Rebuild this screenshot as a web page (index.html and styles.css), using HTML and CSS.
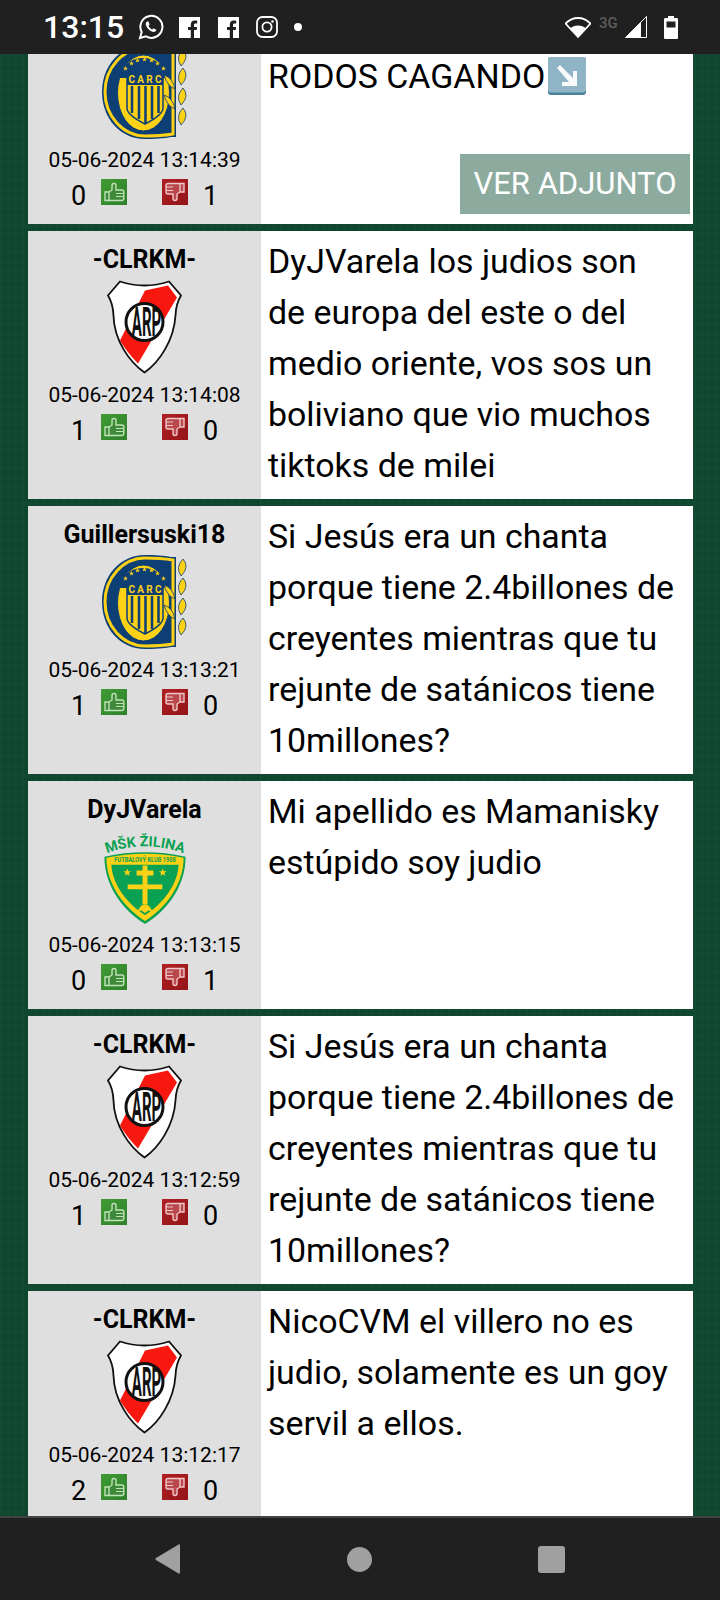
FILE: index.html
```html
<!DOCTYPE html>
<html>
<head>
<title>Comentarios</title>
<meta charset="utf-8">
<link rel="stylesheet" href="styles.css">
</head>
<body>

<svg class="sprite" xmlns="http://www.w3.org/2000/svg">
  <defs>
    <linearGradient id="up-bg" x1="0" y1="0" x2="1" y2="1">
      <stop offset="0" stop-color="#3f9c34"/>
      <stop offset="1" stop-color="#2f7f2a"/>
    </linearGradient>
    <linearGradient id="down-bg" x1="0" y1="0" x2="1" y2="1">
      <stop offset="0" stop-color="#b02024"/>
      <stop offset="1" stop-color="#931418"/>
    </linearGradient>
  </defs>

  <symbol id="thumb-up" viewBox="0 0 26 26">
    <rect width="26" height="26" fill="url(#up-bg)"/>
    <path d="M4 13h4v8.500H4zM8 13l3-2V6.500c0-2.700 4-2.700 4 0v4.500h6c1.200 0 1.800.7 1.800 2v6.500c0 1.300-.8 2-2 2H8z" fill="#3f8a3a" stroke="#bfe3b6" stroke-width="1.400"/>
    <path d="M15 14.500h7.500M15 17.500h7.500" stroke="#bfe3b6" stroke-width="1.200"/>
  </symbol>

  <symbol id="thumb-down" viewBox="0 0 26 26">
    <rect width="26" height="26" fill="url(#down-bg)"/>
    <path d="M22 4.500h-4V13h4zM18 4.500H6c-1.200 0-2 .7-2 2V13c0 1.300.7 2 2 2h5v4.500c0 2.700 4 2.700 4 0V15l3-2z" fill="#b9484c" stroke="#f0c6c6" stroke-width="1.400"/>
    <path d="M4 8h7M4 11.500h7" stroke="#f0c6c6" stroke-width="1.200"/>
  </symbol>

  <symbol id="star5" viewBox="-3 -3 6 6">
    <path d="M0-3 .8-.9 3-.9 1.200.4 1.900 2.500 0 1.200-1.900 2.500-1.200.4-3-.9-.8-.9z" fill="#fdd116"/>
  </symbol>
</svg>

<div class="status-bar">
  <span class="clock">13:15</span>

  <svg class="st-whatsapp" viewBox="0 0 26 26">
    <path d="M2 24l1.700-6A11 11 0 1 1 8 22.400z" fill="none" stroke="#fff" stroke-width="2"/>
    <path d="M9 7.500c-1.500 1-1.700 3-.5 5 1.300 2.300 3.500 4.500 6 5.300 1.700.5 3.500-.3 4-1.800l-3-1.700-1.300 1.300c-1.500-.7-3-2.200-3.700-3.800l1.200-1.300-1.300-3z" fill="#fff"/>
  </svg>
  <svg class="st-fb" viewBox="0 0 21 21">
    <path d="M0 0h21v21h-6v-8h2.700l.4-3H15V8c0-1 .4-1.500 1.500-1.500h1.700V3.700c-.5 0-1.400-.1-2.300-.1-2.500 0-4.100 1.500-4.100 4.100V10H9v3h2.800v8H0z" fill="#fff"/>
  </svg>
  <svg class="st-fb" viewBox="0 0 21 21">
    <path d="M0 0h21v21h-6v-8h2.700l.4-3H15V8c0-1 .4-1.500 1.500-1.500h1.700V3.700c-.5 0-1.400-.1-2.300-.1-2.500 0-4.100 1.500-4.100 4.100V10H9v3h2.800v8H0z" fill="#fff"/>
  </svg>
  <svg class="st-insta" viewBox="0 0 22 22">
    <rect x="1" y="1" width="20" height="20" rx="5.500" fill="none" stroke="#fff" stroke-width="1.800"/>
    <circle cx="11" cy="11" r="4.600" fill="none" stroke="#fff" stroke-width="1.800"/>
    <circle cx="16.500" cy="5.500" r="1.300" fill="#fff"/>
  </svg>
  <span class="st-dot"></span>

  <div class="status-right">
    <svg class="st-wifi" viewBox="0 0 26 22">
      <path d="M13 21 .5 7.500C4 4 8.300 2 13 2s9 2 12.500 5.500z" fill="none" stroke="#fff" stroke-width="1.800"/>
      <path d="M13 21 5 12.500C7 10.500 10 9.500 13 9.500s6 1 8 3z" fill="#fff"/>
    </svg>
    <span class="st-3g">3G</span>
    <svg class="st-signal" viewBox="0 0 22 22">
      <path d="M21.500 .5V21.500H.5z" fill="none" stroke="#fff" stroke-width="1"/>
      <path d="M16 6V21.500H.5z" fill="#fff"/>
    </svg>
    <svg class="st-battery" viewBox="0 0 14 23">
      <path d="M4 0h6v2h2.500c1 0 1.500.5 1.500 1.500V21.500c0 1-.5 1.500-1.500 1.500h-11C.5 23 0 22.500 0 21.500V3.500C0 2.500.5 2 1.500 2H4z" fill="#fff"/>
      <rect x="2.500" y="5.500" width="9" height="6" fill="#202020"/>
    </svg>
  </div>
</div>

<div class="feed">

  <div class="post">
    <div class="post-side">
      <div class="post-user"></div>
      <svg class="crest crest-ros" viewBox="0 0 85 94">
        <path d="M74 2H69C62 .5 52 0 43 0 18 0 0 21 0 47s18 47 43 47c9 0 19-.5 26-2h5z" fill="#0d3f75"/>
        <path d="M71 5C62 3.500 52 3 43 3 21 3 3 23 3 47s18 44 40 44c9 0 19-.5 28-2z" fill="none" stroke="#fdd116" stroke-width="3"/>
        <ellipse cx="41.500" cy="48" rx="26" ry="38" fill="#fdd116" stroke="#0d3f75" stroke-width="1"/>
        <path d="M17 33C21 18 31 13 41.500 13S63 19 66 33z" fill="#0d3f75"/>
        <use href="#star5" x="21" y="21" width="5" height="5"/><use href="#star5" x="27" y="16" width="5" height="5"/><use href="#star5" x="33" y="13" width="5" height="5"/><use href="#star5" x="40" y="12" width="5" height="5"/><use href="#star5" x="47" y="13" width="5" height="5"/><use href="#star5" x="53" y="16" width="5" height="5"/><use href="#star5" x="59" y="21" width="5" height="5"/>
        <path d="M25 28 43 23l18 5v35c0 6-8 11-18 16-10-5-18-10-18-16z" fill="#fdd116" stroke="#0d3f75" stroke-width="1.500"/>
        <path d="M25 28 43 23l18 5v12H25z" fill="#0d3f75"/>
        <text class="crest-text" x="43" y="37.500" font-size="10" text-anchor="middle" textLength="33" fill="#fdd116">CARC</text>
        <path d="M30 41v27M37 41v33M43.500 41v37M50 41v33M56.500 41v27" stroke="#0d3f75" stroke-width="2.500"/>
        <g fill="#fdd116" stroke="#0d3f75" stroke-width=".8">
          <path d="M81 4Q88 12 79 21 73 12 81 4z"/><path d="M81 23Q88 31 79 40 73 31 81 23z"/><path d="M81 43Q88 51 79 60 73 51 81 43z"/><path d="M81 63Q88 71 79 80 73 71 81 63z"/>
          <path d="M62 30Q71 33 73 44 65 41 62 30z"/><path d="M62 50Q71 53 73 64 65 61 62 50z"/>
        </g>
      </svg>
      <div class="post-date">05-06-2024 13:14:39</div>
      <div class="votes">
        <span class="count">0</span>
        <svg class="thumb"><use href="#thumb-up"/></svg>
        <svg class="thumb thumb-bad"><use href="#thumb-down"/></svg>
        <span class="count count-bad">1</span>
      </div>
    </div>
    <div class="post-msg post-msg-cut">
      <div>RODOS CAGANDO<svg class="emoji" viewBox="0 0 38 38">
        <rect x="0" y="0" width="38" height="38" rx="3" fill="#4a8299"/>
        <rect x="0" y="0" width="38" height="35.500" rx="3" fill="#8fb4c6"/>
        <path d="M9 11l3-3 13 13v-7h4v15H14v-4h7z" fill="#f7f9fa"/>
      </svg></div>
      <a class="attach">VER ADJUNTO</a>
    </div>
  </div>

  <div class="post">
    <div class="post-side">
      <div class="post-user">-CLRKM-</div>
      <svg class="crest crest-riv" viewBox="0 0 75 93">
        <path d="M13 1Q25 5 37.500 5 50 5 62 1L74 15Q69 23 68.500 35C67 60 52 82 37.500 92 23 82 7 60 6.500 35 6 23 1 15 1 15z" fill="#fff" stroke="#111" stroke-width="1.800"/>
        <path d="M38 10 61 5l9 12-39 66Q20 72 13 60z" fill="#f8180f"/>
        <circle cx="37.500" cy="41.500" r="18.500" fill="#fff" stroke="#111" stroke-width="3"/>
        <text class="crest-text" transform="translate(39.500 55.500) scale(.44 1.200)" font-size="34" text-anchor="middle" fill="#111">ARP</text>
      </svg>
      <div class="post-date">05-06-2024 13:14:08</div>
      <div class="votes">
        <span class="count">1</span>
        <svg class="thumb"><use href="#thumb-up"/></svg>
        <svg class="thumb thumb-bad"><use href="#thumb-down"/></svg>
        <span class="count count-bad">0</span>
      </div>
    </div>
    <div class="post-msg">DyJVarela los judios son de europa del este o del medio oriente, vos sos un boliviano que vio muchos tiktoks de milei</div>
  </div>

  <div class="post">
    <div class="post-side">
      <div class="post-user">Guillersuski18</div>
      <svg class="crest crest-ros" viewBox="0 0 85 94">
        <path d="M74 2H69C62 .5 52 0 43 0 18 0 0 21 0 47s18 47 43 47c9 0 19-.5 26-2h5z" fill="#0d3f75"/>
        <path d="M71 5C62 3.500 52 3 43 3 21 3 3 23 3 47s18 44 40 44c9 0 19-.5 28-2z" fill="none" stroke="#fdd116" stroke-width="3"/>
        <ellipse cx="41.500" cy="48" rx="26" ry="38" fill="#fdd116" stroke="#0d3f75" stroke-width="1"/>
        <path d="M17 33C21 18 31 13 41.500 13S63 19 66 33z" fill="#0d3f75"/>
        <use href="#star5" x="21" y="21" width="5" height="5"/><use href="#star5" x="27" y="16" width="5" height="5"/><use href="#star5" x="33" y="13" width="5" height="5"/><use href="#star5" x="40" y="12" width="5" height="5"/><use href="#star5" x="47" y="13" width="5" height="5"/><use href="#star5" x="53" y="16" width="5" height="5"/><use href="#star5" x="59" y="21" width="5" height="5"/>
        <path d="M25 28 43 23l18 5v35c0 6-8 11-18 16-10-5-18-10-18-16z" fill="#fdd116" stroke="#0d3f75" stroke-width="1.500"/>
        <path d="M25 28 43 23l18 5v12H25z" fill="#0d3f75"/>
        <text class="crest-text" x="43" y="37.500" font-size="10" text-anchor="middle" textLength="33" fill="#fdd116">CARC</text>
        <path d="M30 41v27M37 41v33M43.500 41v37M50 41v33M56.500 41v27" stroke="#0d3f75" stroke-width="2.500"/>
        <g fill="#fdd116" stroke="#0d3f75" stroke-width=".8">
          <path d="M81 4Q88 12 79 21 73 12 81 4z"/><path d="M81 23Q88 31 79 40 73 31 81 23z"/><path d="M81 43Q88 51 79 60 73 51 81 43z"/><path d="M81 63Q88 71 79 80 73 71 81 63z"/>
          <path d="M62 30Q71 33 73 44 65 41 62 30z"/><path d="M62 50Q71 53 73 64 65 61 62 50z"/>
        </g>
      </svg>
      <div class="post-date">05-06-2024 13:13:21</div>
      <div class="votes">
        <span class="count">1</span>
        <svg class="thumb"><use href="#thumb-up"/></svg>
        <svg class="thumb thumb-bad"><use href="#thumb-down"/></svg>
        <span class="count count-bad">0</span>
      </div>
    </div>
    <div class="post-msg">Si Jesús era un chanta porque tiene 2.4billones de creyentes mientras que tu rejunte de satánicos tiene 10millones?</div>
  </div>

  <div class="post">
    <div class="post-side">
      <div class="post-user">DyJVarela</div>
      <svg class="crest crest-zil" viewBox="0 0 82 95">
        <path id="zilina-arc" d="M1 24Q41 9 81 24" fill="none"/>
        <text class="crest-text" font-size="14.400" fill="#0aa152"><textPath href="#zilina-arc" startOffset="50%" text-anchor="middle">MŠK ŽILINA</textPath></text>
        <path d="M0 27Q41 18 82 27C82 58 62 82 41 95 20 82 0 58 0 27z" fill="#0aa152"/>
        <path d="M2 28Q41 20 80 28C80 56 61 79 41 92 21 79 2 56 2 28z" fill="#fdd116"/>
        <path d="M7 35H75C74 56 58 75 41 86 24 75 8 56 7 35z" fill="#0aa152"/>
        <text class="crest-text" x="41" y="32.500" font-size="6.500" text-anchor="middle" textLength="62" lengthAdjust="spacingAndGlyphs" fill="#0aa152">FUTBALOVÝ KLUB 1908</text>
        <path d="M38.500 36h5v5h6v5h-6v9h15v5h-15v15h-5V60h-15v-5h15v-9h-6v-5h6z" fill="#fdd116"/>
        <path d="M33 84q3-9 8-9t8 9l-4-3-4 3-4-3z" fill="#fdd116"/>
        <use href="#star5" x="19" y="39" width="8" height="8"/>
        <use href="#star5" x="55" y="39" width="8" height="8"/>
      </svg>
      <div class="post-date">05-06-2024 13:13:15</div>
      <div class="votes">
        <span class="count">0</span>
        <svg class="thumb"><use href="#thumb-up"/></svg>
        <svg class="thumb thumb-bad"><use href="#thumb-down"/></svg>
        <span class="count count-bad">1</span>
      </div>
    </div>
    <div class="post-msg">Mi apellido es Mamanisky estúpido soy judio</div>
  </div>

  <div class="post">
    <div class="post-side">
      <div class="post-user">-CLRKM-</div>
      <svg class="crest crest-riv" viewBox="0 0 75 93">
        <path d="M13 1Q25 5 37.500 5 50 5 62 1L74 15Q69 23 68.500 35C67 60 52 82 37.500 92 23 82 7 60 6.500 35 6 23 1 15 1 15z" fill="#fff" stroke="#111" stroke-width="1.800"/>
        <path d="M38 10 61 5l9 12-39 66Q20 72 13 60z" fill="#f8180f"/>
        <circle cx="37.500" cy="41.500" r="18.500" fill="#fff" stroke="#111" stroke-width="3"/>
        <text class="crest-text" transform="translate(39.500 55.500) scale(.44 1.200)" font-size="34" text-anchor="middle" fill="#111">ARP</text>
      </svg>
      <div class="post-date">05-06-2024 13:12:59</div>
      <div class="votes">
        <span class="count">1</span>
        <svg class="thumb"><use href="#thumb-up"/></svg>
        <svg class="thumb thumb-bad"><use href="#thumb-down"/></svg>
        <span class="count count-bad">0</span>
      </div>
    </div>
    <div class="post-msg">Si Jesús era un chanta porque tiene 2.4billones de creyentes mientras que tu rejunte de satánicos tiene 10millones?</div>
  </div>

  <div class="post">
    <div class="post-side">
      <div class="post-user">-CLRKM-</div>
      <svg class="crest crest-riv" viewBox="0 0 75 93">
        <path d="M13 1Q25 5 37.500 5 50 5 62 1L74 15Q69 23 68.500 35C67 60 52 82 37.500 92 23 82 7 60 6.500 35 6 23 1 15 1 15z" fill="#fff" stroke="#111" stroke-width="1.800"/>
        <path d="M38 10 61 5l9 12-39 66Q20 72 13 60z" fill="#f8180f"/>
        <circle cx="37.500" cy="41.500" r="18.500" fill="#fff" stroke="#111" stroke-width="3"/>
        <text class="crest-text" transform="translate(39.500 55.500) scale(.44 1.200)" font-size="34" text-anchor="middle" fill="#111">ARP</text>
      </svg>
      <div class="post-date">05-06-2024 13:12:17</div>
      <div class="votes">
        <span class="count">2</span>
        <svg class="thumb"><use href="#thumb-up"/></svg>
        <svg class="thumb thumb-bad"><use href="#thumb-down"/></svg>
        <span class="count count-bad">0</span>
      </div>
    </div>
    <div class="post-msg">NicoCVM el villero no es judio, solamente es un goy servil a ellos.</div>
  </div>

</div>

<div class="nav-bar">
  <svg class="nav-back" viewBox="0 0 26 30">
    <path d="M25 1.500V28.500c0 1-1 1.500-1.800.8L1 16c-.8-.5-.8-1.500 0-2L23.200.7C24 0 25 .5 25 1.500z" fill="#a0a0a0"/>
  </svg>
  <span class="nav-home"></span>
  <span class="nav-recent"></span>
</div>

</body>
</html>
```

FILE: styles.css
```css
* {
  box-sizing: border-box;
}

html, body {
  margin: 0;
  height: 1600px;
  overflow: hidden;
}

body {
  font-family: 'Roboto', sans-serif;
  display: flex;
  flex-direction: column;
  color: black;
  background-color: #0e472f;
  background-image:
    repeating-linear-gradient(90deg, rgba(255, 255, 255, 0.01) 0 3px, rgba(0, 0, 0, 0.012) 3px 7px),
    repeating-linear-gradient(0deg, rgba(0, 0, 0, 0.012) 0 4px, rgba(255, 255, 255, 0.008) 4px 9px);
}

.sprite {
  position: absolute;
  width: 0;
  height: 0;
}

/* status bar */
.status-bar {
  flex: none;
  height: 54px;
  background-color: #202020;
  display: flex;
  align-items: center;
  padding: 0 42px 0 43px;
  color: white;
  position: relative;
  z-index: 2;
}

.clock {
  font-size: 32px;
  font-weight: 500;
  width: 95px;
}

.st-whatsapp {
  width: 26px;
  height: 26px;
  margin-right: 15px;
}

.st-fb {
  width: 21px;
  height: 21px;
  margin-right: 18px;
}

.st-insta {
  width: 22px;
  height: 22px;
  margin-right: 16px;
  margin-left: -1px;
}

.st-dot {
  width: 8px;
  height: 8px;
  border-radius: 50%;
  background-color: white;
}

.status-right {
  margin-left: auto;
  display: flex;
  align-items: center;
}

.st-wifi {
  width: 26px;
  height: 22px;
  margin-right: 8px;
}

.st-3g {
  font-size: 15px;
  font-weight: 500;
  color: #5c5c5c;
  width: 26px;
  margin-top: -8px;
}

.st-signal {
  width: 22px;
  height: 22px;
  margin-right: 17px;
}

.st-battery {
  width: 14px;
  height: 23px;
}

/* posts */
.feed {
  flex: 1;
  min-height: 0;
  overflow: hidden;
  display: flex;
  flex-direction: column;
  gap: 7px;
  padding: 0 27px 0 28px;
}

.post {
  flex: none;
  display: flex;
  background-color: white;
}

.post:first-child {
  margin-top: -58px;
}

.post-side {
  flex: none;
  width: 233px;
  background-color: #dfdfdf;
  padding: 15px 0 13px;
  display: flex;
  flex-direction: column;
  align-items: center;
}

.post-user {
  font-size: 25px;
  font-weight: 700;
  line-height: 28px;
  min-height: 28px;
  margin-bottom: 6px;
}

.crest {
  display: block;
  height: 94px;
  flex: none;
}

.crest-ros {
  width: 85px;
}

.crest-riv {
  width: 75px;
}

.crest-zil {
  width: 82px;
}

.crest-text {
  font-family: 'Roboto', sans-serif;
  font-weight: 700;
}

.post-date {
  font-size: 21px;
  line-height: 24px;
  margin-top: 9px;
  margin-bottom: 7px;
}

.votes {
  align-self: stretch;
  display: flex;
  align-items: flex-start;
  padding-left: 43px;
}

.count {
  font-size: 27px;
  line-height: 34px;
  height: 32px;
  width: 30px;
}

.count-bad {
  margin-left: 15px;
}

.thumb {
  width: 26px;
  height: 26px;
}

.thumb-bad {
  margin-left: 35px;
}

.post-msg {
  flex: 1;
  min-width: 0;
  font-size: 33.9px;
  line-height: 51px;
  padding: 5px 16px 8px 7px;
}

.post-msg-cut {
  padding: 55px 3px 10px 7px;
  display: flex;
  flex-direction: column;
}

.emoji {
  width: 38px;
  height: 38px;
  margin-left: 3px;
  vertical-align: -7px;
}

.attach {
  margin-top: auto;
  align-self: flex-end;
  width: 230px;
  height: 60px;
  line-height: 60px;
  text-align: center;
  background-color: #8cab9e;
  color: white;
  font-size: 31px;
}

/* bottom nav */
.nav-bar {
  flex: none;
  height: 84px;
  background-color: #202020;
  border-top: 2px solid #444;
  display: flex;
  align-items: center;
  justify-content: center;
  gap: 166px;
  position: relative;
  z-index: 2;
}

.nav-back {
  width: 26px;
  height: 30px;
}

.nav-home {
  width: 25px;
  height: 25px;
  border-radius: 50%;
  background-color: #a0a0a0;
}

.nav-recent {
  width: 27px;
  height: 27px;
  border-radius: 3px;
  background-color: #a0a0a0;
}
```
